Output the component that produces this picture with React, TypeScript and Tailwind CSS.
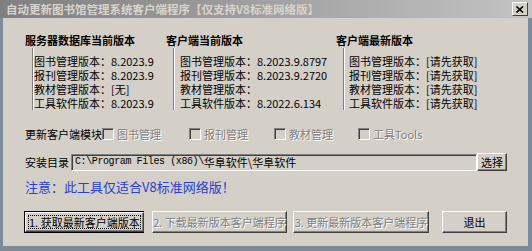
import React from "react";

const col1 = ["图书管理版本：8.2023.9", "报刊管理版本：8.2023.9", "教材管理版本：[无]", "工具软件版本：8.2023.9"];
const col2 = ["图书管理版本：8.2023.9.8797", "报刊管理版本：8.2023.9.2720", "教材管理版本：", "工具软件版本：8.2022.6.134"];
const col3 = ["图书管理版本：[请先获取]", "报刊管理版本：[请先获取]", "教材管理版本：[请先获取]", "工具软件版本：[请先获取]"];

function Group({ title, rows, width, pl }: { title: string; rows: string[]; width: string; pl: string }) {
  return (
    <div className={`flex flex-col ${width}`}>
      <div className="font-bold text-[11px] leading-[16px] h-[16px] whitespace-nowrap">{title}</div>
      <div className={`ml-[7px] border-l border-l-[#808080] shadow-[inset_1px_0_0_#ffffff] pt-[6px] ${pl}`}>
        {rows.map((r) => (
          <div key={r} className="text-[11px] leading-[14px] h-[14px] whitespace-nowrap">
            {r}
          </div>
        ))}
      </div>
    </div>
  );
}

function Check({ label, width }: { label: string; width: string }) {
  return (
    <div className={`flex items-center gap-[3px] ${width}`}>
      <span className="inline-block w-[12px] h-[12px] bg-[#d4d0c8] border border-t-[#808080] border-l-[#808080] border-r-white border-b-white shadow-[inset_1px_1px_0_#404040]" />
      <span className="text-[#808080] [text-shadow:1px_1px_0_#ffffff] whitespace-nowrap">{label}</span>
    </div>
  );
}

function Btn({
  label,
  width,
  disabled,
  def,
}: {
  label: string;
  width: string;
  disabled?: boolean;
  def?: boolean;
}) {
  if (def) {
    return (
      <div className={`${width} h-[22px] border border-black flex`}>
        <div className="flex-1 border border-t-white border-l-white border-r-[#404040] border-b-[#404040] shadow-[inset_-1px_-1px_0_#808080] bg-[#d4d0c8] flex p-[2px]">
          <div className="flex-1 border border-dotted border-black flex items-center justify-center text-[11px] leading-[14px] whitespace-nowrap">
            {label}
          </div>
        </div>
      </div>
    );
  }
  return (
    <div
      className={`${width} h-[22px] border border-t-white border-l-white border-r-[#404040] border-b-[#404040] shadow-[inset_-1px_-1px_0_#808080] bg-[#d4d0c8] flex items-center justify-center text-[11px] leading-[14px] whitespace-nowrap ${
        disabled ? "text-[#808080] [text-shadow:1px_1px_0_#ffffff]" : "text-black"
      }`}
    >
      {label}
    </div>
  );
}

export default function App() {
  return (
    <div className="w-[532px] h-[251px] flex flex-col bg-[#7c8a99] font-['Noto_Sans_CJK_SC','Noto_Sans',sans-serif] text-black overflow-hidden">
      {/* title bar */}
      <div className="h-[18px] flex items-center justify-between pl-[6px] pr-[4px] bg-gradient-to-r from-[#808080] to-[#c3c3c3]">
        <span className="text-[11.5px] font-bold leading-[14px] text-[#d8d4cc] whitespace-nowrap">
          自动更新图书馆管理系统客户端程序【仅支持V8标准网络版】
        </span>
        <div className="w-[16px] h-[14px] bg-[#d4d0c8] border border-t-white border-l-white border-r-[#404040] border-b-[#404040] flex items-center justify-center">
          <svg width="8" height="7" viewBox="0 0 8 7">
            <path d="M0.5 0.5 L7 6.5 M7 0.5 L0.5 6.5" stroke="#000" strokeWidth="1.6" />
          </svg>
        </div>
      </div>
      {/* body */}
      <div className="flex-1 ml-[3px] mr-[4px] mb-[5px] bg-[#d4d0c8] flex flex-col pt-[14px] pl-[22px] text-[11px] leading-[16px]">
        <div className="flex">
          <Group title="服务器数据库当前版本" rows={col1} width="w-[141px]" pl="pl-[1px]" />
          <Group title="客户端当前版本" rows={col2} width="w-[170px]" pl="pl-[6px]" />
          <Group title="客户端最新版本" rows={col3} width="w-[160px]" pl="pl-[5px]" />
        </div>
        <div className="flex items-center h-[16px] mt-[16px]">
          <span className="w-[77px] whitespace-nowrap">更新客户端模块</span>
          <Check label="图书管理" width="w-[87px]" />
          <Check label="报刊管理" width="w-[85px]" />
          <Check label="教材管理" width="w-[84px]" />
          <Check label="工具Tools" width="w-[80px]" />
        </div>
        <div className="flex items-center h-[18px] mt-[11px]">
          <span className="w-[46px] whitespace-nowrap">安装目录</span>
          <div className="w-[406px] h-[17px] border border-t-[#808080] border-l-[#808080] border-r-white border-b-white shadow-[inset_1px_1px_0_#404040] bg-[#d4d0c8] flex items-center pl-[3px] text-[11px] whitespace-nowrap overflow-hidden">
            <span className="font-['Liberation_Mono',monospace] text-[10px] tracking-[-0.4px]">C:\Program Files (x86)\</span>
            <span>华阜软件\华阜软件</span>
          </div>
          <div className="w-[30px] h-[18px] border border-t-white border-l-white border-r-[#404040] border-b-[#404040] shadow-[inset_-1px_-1px_0_#808080] flex items-center justify-center">
            选择
          </div>
        </div>
        <div className="mt-[8px] h-[16px] text-[13px] leading-[16px] text-[#2a40d0] whitespace-nowrap">
          注意：此工具仅适合V8标准网络版！
        </div>
        <div className="flex mt-[16px] -ml-[1px]">
          <Btn label="1. 获取最新客户端版本" width="w-[120px]" def />
          <div className="w-[8px]" />
          <Btn label="2. 下载最新版本客户端程序" width="w-[135px]" disabled />
          <div className="w-[6px]" />
          <Btn label="3. 更新最新版本客户端程序" width="w-[136px]" disabled />
          <div className="w-[13px]" />
          <Btn label="退出" width="w-[65px]" />
        </div>
      </div>
    </div>
  );
}
